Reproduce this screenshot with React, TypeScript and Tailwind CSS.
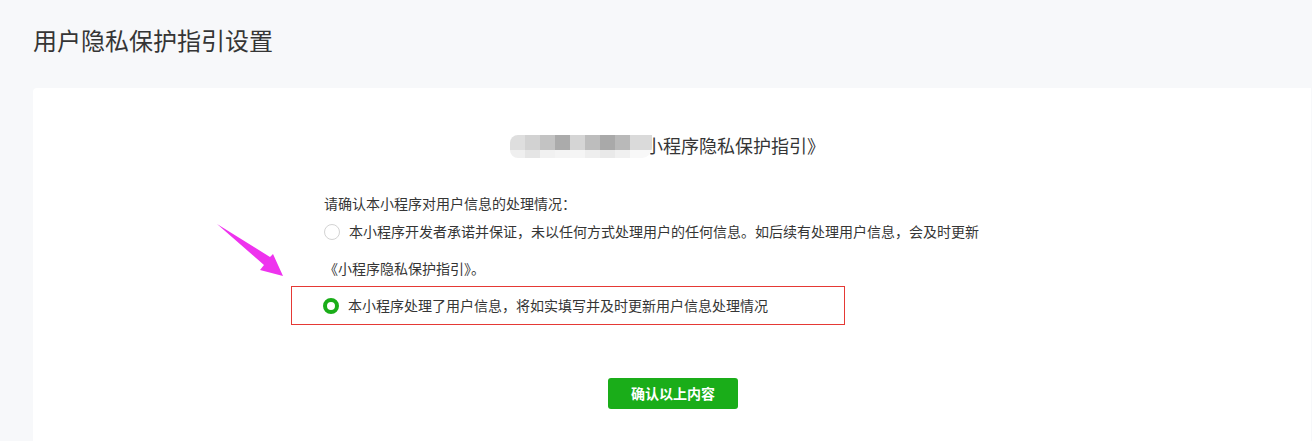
import React from 'react';

const FONT = { fontFamily: '"Noto Sans CJK SC", "Noto Sans", sans-serif' };

const mosaicTop = ['#dedede', '#d2d2d2', '#c3c3c3', '#ababab', '#d5d5d5', '#bdbdbd', '#a9a9a9', '#b9b9b9', '#dadada'];
const mosaicBottom = ['#efefef', '#e5e5e5', '#f1f1f1', '#f4f4f4', '#f5f5f5', '#eeeeee', '#e9e9e9', '#f0f0f0', '#f8f8f8'];

function Mosaic() {
  return (
    <span className="absolute left-[-9px] top-[4px] flex flex-col overflow-hidden rounded-l-[8px] rounded-br-[10px]">
      <span className="flex">
        {mosaicTop.map((c, i) => (
          <span key={i} className={`block h-[15px] ${i === 8 ? 'w-[22px]' : 'w-[15px]'}`} style={{ background: c }} />
        ))}
      </span>
      <span className="flex">
        {mosaicBottom.map((c, i) => (
          <span key={i} className={`block h-[8px] ${i === 8 ? 'w-[22px]' : 'w-[15px]'}`} style={{ background: c }} />
        ))}
      </span>
    </span>
  );
}

function Arrow() {
  return (
    <svg className="absolute left-[180px] top-[132px]" width="80" height="64" viewBox="180 132 80 64">
      <polygon
        points="184,136 237,169 240,166 250,188 227,182 231,177"
        fill="#ee33ee"
      />
    </svg>
  );
}

export default function App() {
  return (
    <div className="min-h-[441px] bg-[#f7f8fa] text-[#353535]" style={FONT}>
      <div className="pl-[33px] pt-[24px] text-[24px] leading-[32px] text-[#353535]">用户隐私保护指引设置</div>

      <div className="relative ml-[33px] mr-[1px] mt-[32px] h-[353px] rounded-tl-[4px] bg-white pt-[43px]">
        <Arrow />
        <div className="text-center text-[18px] leading-[28px]">
          <span className="relative inline-block">
            《某某某某某某小程序隐私保护指引》
            <Mosaic />
          </span>
        </div>

        <div className="mt-[34px] pl-[291px] text-[14px]">
          <div className="leading-[20px]">请确认本小程序对用户信息的处理情况：</div>
          <div className="w-[664px] leading-[37px]">
            <span className="mr-[9px] inline-block h-[16px] w-[16px] translate-y-[3px] rounded-full border border-[#d3d3d3] bg-white" />
            本小程序开发者承诺并保证，未以任何方式处理用户的任何信息。如后续有处理用户信息，会及时更新《小程序隐私保护指引》。
          </div>
          <div className="-ml-[33px] -mt-[1px] flex h-[39px] w-[554px] items-center border border-[#e53935] pl-[31px]">
            <span className="mr-[9px] flex h-[16px] w-[16px] items-center justify-center rounded-full border-[4px] border-[#1aad19] bg-white" />
            本小程序处理了用户信息，将如实填写并及时更新用户信息处理情况
          </div>
        </div>

        <div className="mt-[53px] flex justify-center pl-[2px]">
          <button className="h-[31px] w-[130px] rounded-[3px] bg-[#1aad19] text-[14px] font-bold text-white">
            确认以上内容
          </button>
        </div>
      </div>
    </div>
  );
}
